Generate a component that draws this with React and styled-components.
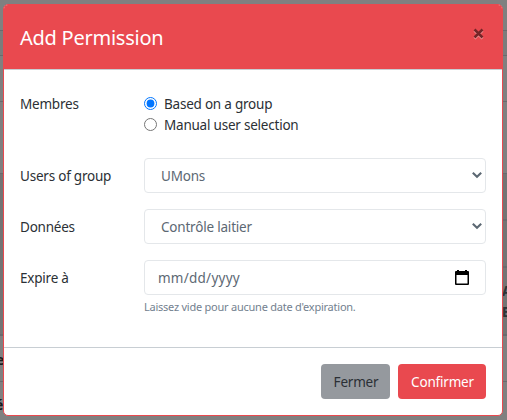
import React from 'react';
import styled, { createGlobalStyle } from 'styled-components';

const Global = createGlobalStyle`
  *, *::before, *::after { box-sizing: border-box; }
  html, body { margin: 0; height: 420px; overflow: hidden; }
  body { font: 14px/21px "Noto Sans", "Open Sans", sans-serif; color: #2b3035; }
`;

const Page = styled.div`
  position: relative;
  width: 507px;
  height: 420px;
  background: #808080;
  display: flex;
  justify-content: space-between;
`;
const Strip = styled.div`
  width: 6px;
  overflow: hidden;
  display: flex;
  flex-direction: column;
`;
const Band = styled.div`
  height: ${p => p.$h}px;
  flex: none;
  background: ${p => p.$c};
  border-bottom: ${p => p.$line ?? 1}px solid #686b6e;
`;
const Fragment = styled.span`
  position: absolute;
  z-index: 0;
  left: ${p => p.$x}px;
  top: ${p => p.$y}px;
  font-size: 14px;
  font-weight: 700;
  line-height: 20px;
  color: ${p => p.$c ?? '#191b1d'};
`;
const Modal = styled.section`
  position: absolute;
  z-index: 1;
  left: 3px;
  top: 4px;
  width: 500px;
  height: 412px;
  background: #fff;
  border: 1px solid #e9494f;
  border-radius: 5px;
  display: flex;
  flex-direction: column;
`;
const Header = styled.header`
  height: 65px;
  padding: 16px;
  display: flex;
  justify-content: space-between;
  background: #e9494f;
  border-bottom: 1px solid #c8ced3;
  border-radius: 4px 4px 0 0;
`;
const Title = styled.h4`
  margin: 1px 0 0;
  font-size: 20px;
  line-height: 32px;
  font-weight: 400;
  color: #fff;
  letter-spacing: -0.25px;
`;
const Close = styled.button`
  border: 0;
  padding: 0;
  width: 15px;
  height: 26px;
  background: none;
  display: flex;
  align-items: center;
  justify-content: center;
`;
const Body = styled.div`
  flex: 1;
  padding: 24px 16px 0;
`;
const Row = styled.div`
  display: grid;
  grid-template-columns: 124px 342px;
  align-items: start;
  margin-bottom: ${p => p.$gap ?? 16}px;
`;
const Label = styled.label`
  padding-top: ${p => p.$top ?? 8}px;
  line-height: 21px;
  font-size: 13.5px;
  letter-spacing: -0.22px;
`;
const Option = styled.label`
  display: flex;
  align-items: center;
  height: 21px;
  font-size: 13.5px;
  letter-spacing: -0.22px;
`;
const Radio = styled.input`
  margin: 0 7px 2px 0;
  width: 13px;
  height: 13px;
  accent-color: #0075ff;
`;
const Field = styled.div`
  height: 35px;
  padding: 1px 3px 0 ${p => p.$left ?? 16}px;
  border: 1px solid #e4e7ea;
  border-radius: 4px;
  display: flex;
  align-items: center;
  justify-content: space-between;
  font-size: 13.5px;
  letter-spacing: ${p => p.$ls ?? -0.2}px;
  color: #5c6873;
`;
const Hint = styled.small`
  display: block;
  margin-top: 3px;
  font-size: 11px;
  line-height: 17px;
  color: #73818f;
  white-space: nowrap;
  letter-spacing: -0.24px;
`;
const Footer = styled.footer`
  height: 68px;
  border-top: 1px solid #c8ced3;
  padding: 16px;
  display: flex;
  justify-content: flex-end;
  gap: 8px;
`;
const Button = styled.button`
  width: ${p => p.$w}px;
  height: 35px;
  padding: 2px 0 0 1px;
  border: 0;
  border-radius: 4px;
  font: 13.5px/21px "Noto Sans", sans-serif;
  letter-spacing: -0.2px;
  background: ${p => (p.$primary ? '#e9494f' : '#95999e')};
  color: ${p => (p.$primary ? '#fff' : '#2b3035')};
`;
const DateIcon = styled.span`
  display: flex;
  margin: 0 13px 2px 0;
`;
const Arrow = styled.span`
  display: flex;
  margin-bottom: 2px;
`;

const Chevron = () => (
  <Arrow>
    <svg width="10" height="8" viewBox="0 0 10 8">
      <path d="M.8 1.8 5 5.8 9.2 1.8" fill="none" stroke="#5c6873" strokeWidth="2.1" />
    </svg>
  </Arrow>
);
const Calendar = () => (
  <svg width="14" height="15" viewBox="0 0 14 15">
    <path fill="#000" fillRule="evenodd" d="M2 0h2v1h6V0h2v1h1q1 0 1 1v12q0 1-1 1H1q-1 0-1-1V2q0-1 1-1h1zM1.5 5v8.5h11V5z" />
  </svg>
);

export default function App() {
  return (
    <>
      <Global />
      <Page>
        <Strip>
          <Band $h={31} $c="#808080" />
          <Band $h={25} $c="#7c7c7c" />
          <Band $h={46} $c="#808080" />
          <Band $h={72} $c="#808080" />
          <Band $h={162} $c="#747474" $line={2} />
          <Band $h={46} $c="#808080" />
        </Strip>
        <Strip>
          <Band $h={31} $c="#808080" />
          <Band $h={25} $c="#7c7c7c" />
          <Band $h={46} $c="#808080" />
          <Band $h={72} $c="#808080" />
          <Band $h={47} $c="#747474" $line={2} />
          <Band $h={47} $c="#747474" $line={2} />
          <Band $h={68} $c="#747474" $line={2} />
          <Band $h={46} $c="#808080" />
        </Strip>
        <Fragment $x={-4} $y={350}>e</Fragment>
        <Fragment $x={-5} $y={395}>é</Fragment>
        <Fragment $x={502} $y={281} $c="#2e3236">A</Fragment>
        <Fragment $x={502} $y={302} $c="#2e3236">B</Fragment>
        <Modal role="dialog">
          <Header>
            <Title>Add Permission</Title>
            <Close aria-label="Close">
              <svg width="11" height="12" viewBox="0 0 11 12">
                <path d="M1.5 2.5 9.5 10.5M9.5 2.5 1.5 10.5" stroke="#f39a9d" strokeWidth="2.6" />
                <path d="M1.5 1.5 9.5 9.5M9.5 1.5 1.5 9.5" stroke="#752528" strokeWidth="2.5" />
              </svg>
            </Close>
          </Header>
          <Body>
            <Row $gap={22}>
              <Label $top={0}>Membres</Label>
              <div>
                <Option><Radio type="radio" name="members" defaultChecked />Based on a group</Option>
                <Option><Radio type="radio" name="members" />Manual user selection</Option>
              </div>
            </Row>
            <Row>
              <Label>Users of group</Label>
              <Field>UMons<Chevron /></Field>
            </Row>
            <Row>
              <Label>Données</Label>
              <Field>Contrôle laitier<Chevron /></Field>
            </Row>
            <Row>
              <Label>Expire à</Label>
              <div>
                <Field $left={13} $ls={0.25}>mm/dd/yyyy<DateIcon><Calendar /></DateIcon></Field>
                <Hint>Laissez vide pour aucune date d'expiration.</Hint>
              </div>
            </Row>
          </Body>
          <Footer>
            <Button $w={69}>Fermer</Button>
            <Button $w={88} $primary>Confirmer</Button>
          </Footer>
        </Modal>
      </Page>
    </>
  );
}
